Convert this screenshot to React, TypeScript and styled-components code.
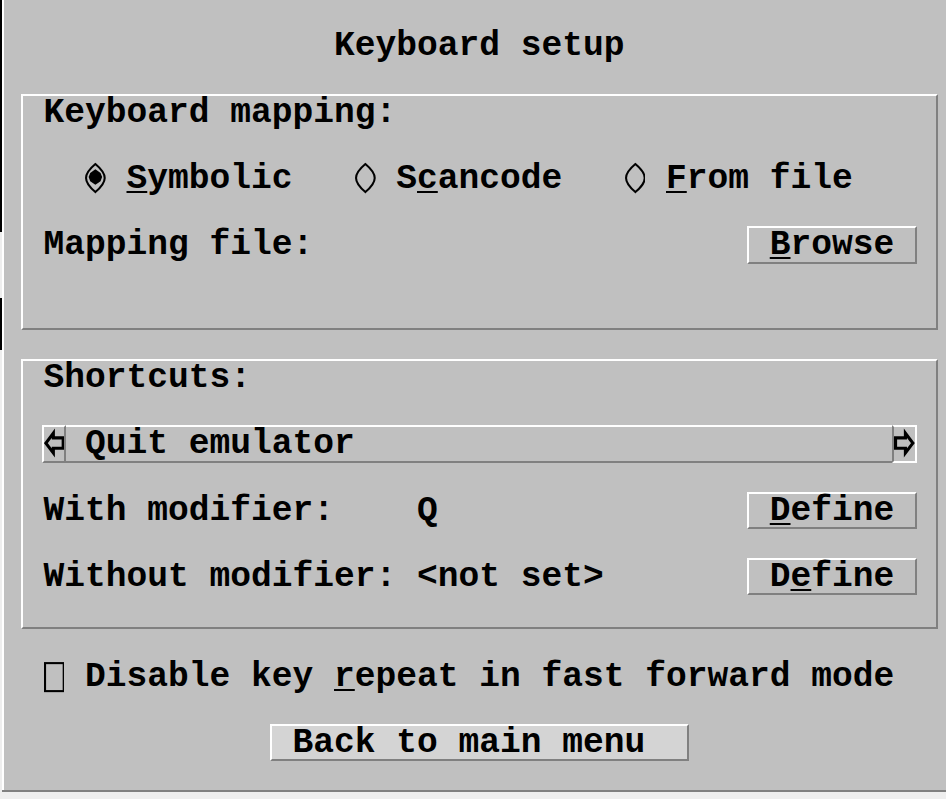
import React from 'react';
import styled, { createGlobalStyle, css } from 'styled-components';

// one character cell of the scaled 10x16 GUI font
const CW = 20.75;
const RH = 33.2;

const GlobalStyle = createGlobalStyle`
  html, body {
    margin: 0;
    padding: 0;
  }

  body {
    background: #eeeeee;
    height: 799px;
    overflow: hidden;
  }
`;

type Pos = { $x: number; $y: number; $w?: number; $h?: number };

const place = css<Pos>`
  grid-column: ${(p) => p.$x + 1} / span ${(p) => p.$w ?? 1};
  grid-row: ${(p) => p.$y + 1} / span ${(p) => p.$h ?? 1};
`;

const bevel = css`
  margin: -2px;
  border: 2px solid;
  border-color: #ffffff #808080 #808080 #ffffff;
`;

const Screen = styled.div`
  display: flex;
  align-items: flex-start;
  height: 799px;
`;

const EdgeStrip = styled.div`
  flex: 0 0 2px;
  height: 799px;
  background: linear-gradient(
    to bottom,
    #000 0,
    #000 232px,
    transparent 232px,
    transparent 298px,
    #000 298px,
    #000 350px,
    transparent 350px
  );
`;

const Dialog = styled.div`
  flex: 0 0 auto;
  margin-top: -4px;
  height: 796px;
  display: grid;
  grid-template-columns: repeat(46, ${CW}px);
  grid-template-rows: repeat(24, ${RH}px);
  background: #c0c0c0;
  box-shadow: inset 0 -2px 0 #808080, inset 2px 0 0 #ffffff;
  font-family: 'Liberation Mono', 'DejaVu Sans Mono', monospace;
  font-size: 34.58px;
  font-weight: bold;
  line-height: ${RH}px;
  color: #000;
  white-space: pre;
  overflow: hidden;
`;

const GroupBox = styled.div<Pos>`
  ${place}
  ${bevel}
  display: grid;
  grid-template-columns: repeat(${(p) => p.$w}, ${CW}px);
  grid-template-rows: repeat(${(p) => p.$h}, ${RH}px);
  background: #c0c0c0;
`;

const Label = styled.div<Pos>`
  ${place}
`;

const Hot = styled.span`
  text-decoration: underline;
  text-decoration-thickness: 2px;
  text-underline-offset: 3px;
`;

const PushButton = styled.button<Pos & { $pad: number; $default?: boolean }>`
  ${place}
  ${bevel}
  padding: 0 0 0 ${(p) => p.$pad * CW}px;
  background: ${(p) => (p.$default ? '#d4d4d4' : '#c0c0c0')};
  font: inherit;
  line-height: ${RH}px;
  color: inherit;
  text-align: left;
  white-space: pre;
  cursor: pointer;
`;

const Choice = styled.label<Pos>`
  ${place}
  display: flex;
  align-items: stretch;
`;

const Glyph = styled.svg`
  flex: 0 0 ${CW}px;
  width: ${CW}px;
  height: ${RH}px;
  margin-right: ${CW}px;
`;

const ShortcutBar = styled.div<Pos>`
  ${place}
  ${bevel}
  display: grid;
  grid-template-columns: repeat(${(p) => p.$w}, ${CW}px);
  grid-template-rows: ${RH}px;
`;

const ArrowButton = styled.button<Pos & { $sunk?: boolean }>`
  ${place}
  margin: -2px;
  padding: 0;
  border: 2px solid;
  border-color: ${(p) =>
    p.$sunk ? '#ffffff #ffffff #ffffff #808080' : '#ffffff #808080 #808080 #ffffff'};
  background: #c0c0c0;
  display: flex;
  cursor: pointer;

  svg {
    width: ${CW}px;
    height: ${RH}px;
  }
`;

const hot = (text: string) => {
  const i = text.indexOf('_');
  if (i < 0) return text;
  return (
    <>
      {text.slice(0, i)}
      <Hot>{text[i + 1]}</Hot>
      {text.slice(i + 2)}
    </>
  );
};

const Button = ({ x, y, w, text, isDefault }: { x: number; y: number; w: number; text: string; isDefault?: boolean }) => {
  const pad = Math.floor((w - text.replace('_', '').length) / 2);
  return (
    <PushButton type="button" $x={x} $y={y} $w={w} $pad={pad} $default={isDefault}>
      {hot(text)}
    </PushButton>
  );
};

const Radio = ({ x, y, w, text, checked }: { x: number; y: number; w: number; text: string; checked?: boolean }) => (
  <Choice $x={x} $y={y} $w={w}>
    <Glyph viewBox="0 0 20 32" preserveAspectRatio="none">
      <path
        d="M10 2 C4 7 1 11 1 15.5 C1 20 4 24 10 29 C16 24 19 20 19 15.5 C19 11 16 7 10 2 Z"
        fill="none"
        stroke="#000"
        strokeWidth="2"
      />
      {checked && <path d="M10 7 L15 10.5 L16.5 14.5 L15 18.5 L10 22 L5 18.5 L3.5 14.5 L5 10.5 Z" fill="#000" />}
    </Glyph>
    <span>{hot(text)}</span>
  </Choice>
);

const CheckBox = ({ x, y, w, text }: { x: number; y: number; w: number; text: string }) => (
  <Choice $x={x} $y={y} $w={w}>
    <Glyph viewBox="0 0 20 32" preserveAspectRatio="none">
      <rect x="1" y="3" width="18" height="27" fill="none" stroke="#000" strokeWidth="2" />
    </Glyph>
    <span>{hot(text)}</span>
  </Choice>
);

const Arrow = ({ flip }: { flip?: boolean }) => (
  <svg viewBox="0 0 20 32" preserveAspectRatio="none">
    <path
      d="M1.8 15.5 L9 6 L9 10.5 L18.5 10.5 L18.5 20.5 L9 20.5 L9 25 Z"
      fill="none"
      stroke="#000"
      strokeWidth="3"
      transform={flip ? 'translate(20 0) scale(-1 1)' : undefined}
    />
  </svg>
);

const App = () => {
  return (
    <>
      <GlobalStyle />
      <Screen>
        <EdgeStrip />
        <Dialog>
          <Label $x={16} $y={1} $w={14}>Keyboard setup</Label>

          <GroupBox $x={1} $y={3} $w={44} $h={7}>
            <Label $x={1} $y={0} $w={17}>Keyboard mapping:</Label>
            <Radio x={3} y={2} w={10} text="_Symbolic" checked />
            <Radio x={16} y={2} w={10} text="S_cancode" />
            <Radio x={29} y={2} w={11} text="_From file" />
            <Label $x={1} $y={4} $w={13}>Mapping file:</Label>
            <Label $x={1} $y={5} $w={42}></Label>
            <Button x={35} y={4} w={8} text="_Browse" />
          </GroupBox>

          <GroupBox $x={1} $y={11} $w={44} $h={8}>
            <Label $x={1} $y={0} $w={10}>Shortcuts:</Label>
            <ShortcutBar $x={1} $y={2} $w={42}>
              <ArrowButton type="button" $x={0} $y={0}>
                <Arrow />
              </ArrowButton>
              <Label $x={2} $y={0} $w={20}>Quit emulator</Label>
              <ArrowButton type="button" $x={41} $y={0} $sunk>
                <Arrow flip />
              </ArrowButton>
            </ShortcutBar>
            <Label $x={1} $y={4} $w={17}>With modifier:</Label>
            <Label $x={19} $y={4} $w={9}>Q</Label>
            <Button x={35} y={4} w={8} text="_Define" />
            <Label $x={1} $y={6} $w={17}>Without modifier:</Label>
            <Label $x={19} $y={6} $w={9}>{'<not set>'}</Label>
            <Button x={35} y={6} w={8} text="D_efine" />
          </GroupBox>

          <CheckBox x={2} y={20} w={41} text="Disable key _repeat in fast forward mode" />
          <Button x={13} y={22} w={20} text="Back to main menu" isDefault />
        </Dialog>
      </Screen>
    </>
  );
};

export default App;
